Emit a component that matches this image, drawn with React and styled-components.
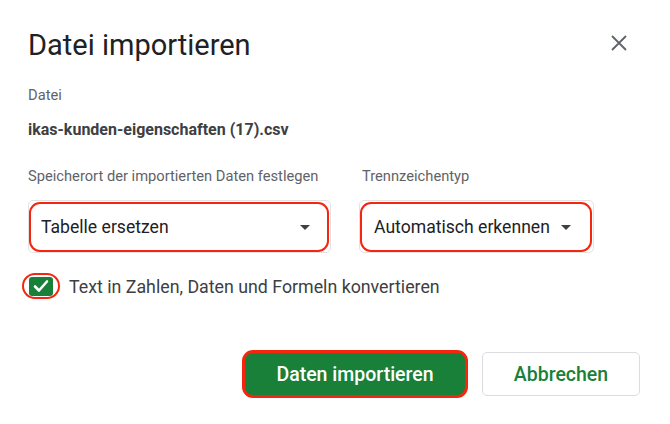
import React from "react";
import styled, { createGlobalStyle } from "styled-components";

const Global = createGlobalStyle`
  html, body { margin: 0; padding: 0; background: #fff; }
  body { font-family: Roboto, "Liberation Sans", Arial, sans-serif; }
  * { box-sizing: border-box; }
`;

const RED = "#f4260f";

const Dialog = styled.div`
  width: 670px;
  height: 424px;
  background: #fff;
  padding: 27px 30px 0 28px;
  display: flex;
  flex-direction: column;
`;

const Header = styled.div`
  display: flex;
  align-items: center;
  justify-content: space-between;
  height: 36px;
`;

const Title = styled.h1`
  margin: 0;
  font-family: Roboto, "Liberation Sans", sans-serif;
  font-size: 29px;
  font-weight: 400;
  line-height: 36px;
  color: #202124;
`;

const CloseButton = styled.button`
  border: none;
  background: none;
  padding: 0;
  width: 24px;
  height: 24px;
  margin: -4px 9px 0 0;
  display: flex;
  align-items: center;
  justify-content: center;
  cursor: pointer;
`;

const FieldLabel = styled.div`
  font-size: 14.7px;
  line-height: 20px;
  color: #5f6368;
  margin-top: ${(p) => p.$top || 0}px;
  padding-left: ${(p) => p.$indent || 0}px;
`;

const FileName = styled.div`
  margin-top: 14px;
  font-size: 16px;
  font-weight: 700;
  line-height: 22px;
  color: #3c4043;
`;

const Columns = styled.div`
  display: flex;
  gap: 28px;
  margin-top: 25px;
`;

const Column = styled.div`
  display: flex;
  flex-direction: column;
  width: ${(p) => p.$width}px;
`;

const SelectFrame = styled.div`
  margin-top: 14px;
  height: 53px;
  border: 1px solid #e3e3e3;
  border-radius: 5px;
  padding: 1px 1px 0 0;
`;

const SelectInner = styled.div`
  height: 50px;
  border: 2.5px solid ${RED};
  border-radius: 11px;
  display: flex;
  align-items: center;
  justify-content: space-between;
  padding: 0 ${(p) => p.$padRight}px 0 ${(p) => p.$padLeft}px;
  font-size: 17.6px;
  color: #202124;
`;

const Arrow = styled.span`
  width: 0;
  height: 0;
  border-left: 5px solid transparent;
  border-right: 5px solid transparent;
  border-top: 5px solid #3c4043;
`;

const CheckRow = styled.label`
  display: flex;
  align-items: center;
  margin-top: 20px;
  margin-left: -6px;
  gap: 9px;
  font-size: 17.8px;
  color: #3c4043;
`;

const CheckRing = styled.span`
  width: 38px;
  height: 26px;
  border: 2.5px solid ${RED};
  border-radius: 13px;
  display: flex;
  align-items: center;
  justify-content: center;
`;

const CheckBox = styled.span`
  width: 24px;
  height: 19px;
  border-radius: 3px;
  background: #188038;
  display: flex;
  align-items: center;
  justify-content: center;
`;

const Actions = styled.div`
  display: flex;
  justify-content: flex-end;
  align-items: center;
  gap: 14px;
  margin-top: 51px;
`;

const PrimaryButton = styled.button`
  width: 226px;
  height: 48px;
  border: 3px solid ${RED};
  border-radius: 11px;
  background: #188038;
  color: #fff;
  font-family: Roboto, "Liberation Sans", sans-serif;
  font-size: 19.5px;
  font-weight: 500;
  cursor: pointer;
`;

const SecondaryButton = styled.button`
  width: 158px;
  height: 44px;
  border: 1px solid #dadce0;
  border-radius: 5px;
  background: #fff;
  color: #188038;
  font-family: Roboto, "Liberation Sans", sans-serif;
  font-size: 19.5px;
  font-weight: 500;
  cursor: pointer;
`;

export default function App() {
  return (
    <>
      <Global />
      <Dialog>
        <Header>
          <Title>Datei importieren</Title>
          <CloseButton aria-label="Schließen">
            <svg width="16" height="16" viewBox="0 0 16 16">
              <path d="M1 1 L15 15 M15 1 L1 15" stroke="#5f6368" strokeWidth="1.8" fill="none" />
            </svg>
          </CloseButton>
        </Header>
        <FieldLabel $top={22}>Datei</FieldLabel>
        <FileName>ikas-kunden-eigenschaften (17).csv</FileName>
        <Columns>
          <Column $width={303}>
            <FieldLabel>Speicherort der importierten Daten festlegen</FieldLabel>
            <SelectFrame>
              <SelectInner $padLeft={10} $padRight={17}>
                Tabelle ersetzen
                <Arrow />
              </SelectInner>
            </SelectFrame>
          </Column>
          <Column $width={235}>
            <FieldLabel $indent={3}>Trennzeichentyp</FieldLabel>
            <SelectFrame>
              <SelectInner $padLeft={12} $padRight={19}>
                Automatisch erkennen
                <Arrow />
              </SelectInner>
            </SelectFrame>
          </Column>
        </Columns>
        <CheckRow>
          <CheckRing>
            <CheckBox>
              <svg width="16" height="14" viewBox="0 0 16 14">
                <path d="M2 7.5 L6 11.5 L14 2.5" stroke="#fff" strokeWidth="2.6" fill="none" strokeLinecap="round" strokeLinejoin="round" />
              </svg>
            </CheckBox>
          </CheckRing>
          Text in Zahlen, Daten und Formeln konvertieren
        </CheckRow>
        <Actions>
          <PrimaryButton>Daten importieren</PrimaryButton>
          <SecondaryButton>Abbrechen</SecondaryButton>
        </Actions>
      </Dialog>
    </>
  );
}
